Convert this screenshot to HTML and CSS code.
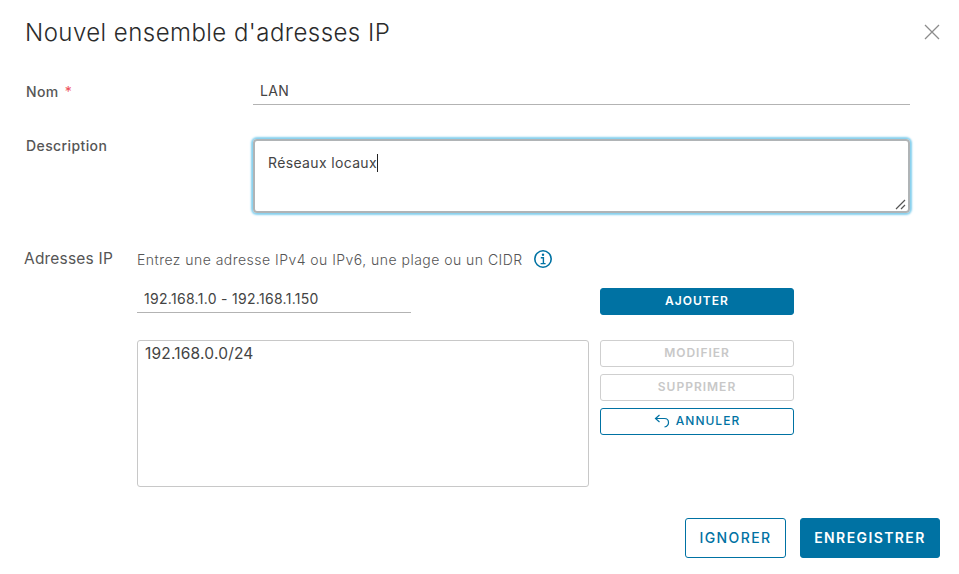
FILE: index.html
```html
<!DOCTYPE html>
<html lang="fr">
<head>
  <meta charset="UTF-8">
  <title>Nouvel ensemble d'adresses IP</title>
  <link rel="stylesheet" href="styles.css">
</head>
<body>
  <div class="dialog">
    <div class="dialog-header">
      <h1>Nouvel ensemble d'adresses IP</h1>
      <svg class="close-icon" width="16" height="16" viewBox="0 0 16 16"><path d="M1 1 L15 15 M15 1 L1 15" fill="none" stroke="#8c8c8c" stroke-width="1.3"/></svg>
    </div>

    <div class="form-row name-row">
      <label class="form-label">Nom <span class="required">*</span></label>
      <div class="line-input">LAN</div>
    </div>

    <div class="form-row desc-row">
      <label class="form-label">Description</label>
      <div class="desc-box">
        <span>Réseaux locaux</span><span class="caret"></span>
        <svg class="resize-grip" width="12" height="12" viewBox="0 0 12 12"><path d="M1 11 L10 2 M6 11 L10 7" fill="none" stroke="#555" stroke-width="1.2"/></svg>
      </div>
    </div>

    <div class="ip-section">
      <div class="ip-title">Adresses IP</div>
      <div class="ip-body">
        <div class="ip-hint">
          <span>Entrez une adresse IPv4 ou IPv6, une plage ou un CIDR</span>
          <svg width="20" height="20" viewBox="0 0 20 20"><circle cx="10" cy="10" r="8.2" fill="none" stroke="#0072a3" stroke-width="1.6"/><circle cx="10" cy="5.8" r="1.2" fill="#0072a3"/><path d="M7.8 8.8 H10.4 V14.4 M7.6 14.6 H12.6" fill="none" stroke="#0072a3" stroke-width="1.4"/></svg>
        </div>
        <div class="ip-grid">
          <div class="line-input ip-input">192.168.1.0 - 192.168.1.150</div>
          <button class="btn btn-primary btn-small">AJOUTER</button>
          <div class="ip-list">192.168.0.0/24</div>
          <div class="btn-stack">
            <button class="btn btn-disabled btn-small">MODIFIER</button>
            <button class="btn btn-disabled btn-small">SUPPRIMER</button>
            <button class="btn btn-outline btn-small">
              <svg width="16" height="16" viewBox="0 0 16 16"><path d="M5.5 2 L1.5 5.5 L5.5 9 M1.5 5.5 H10.5 C13 5.5 14.5 7.2 14.5 9.5 C14.5 11.8 13 13.5 10.5 14" fill="none" stroke="#0072a3" stroke-width="1.2"/></svg>
              ANNULER
            </button>
          </div>
        </div>
      </div>
    </div>

    <div class="dialog-footer">
      <button class="btn btn-outline btn-large">IGNORER</button>
      <button class="btn btn-primary btn-large">ENREGISTRER</button>
    </div>
  </div>
</body>
</html>
```

FILE: styles.css
```css
:root {
  --primary: #0072a3;
  --text-color: #565656;
  --line: #b3b3b3;
}
* { box-sizing: border-box; }
body {
  margin: 0;
  font-family: Inter, "Open Sans", sans-serif;
  background: #fff;
  color: #333;
}
.dialog {
  width: 959px;
  height: 574px;
  padding: 0 19px 0 25px;
  overflow: hidden;
}
.dialog-header {
  display: flex;
  justify-content: space-between;
  align-items: center;
  height: 64px;
}
h1 {
  margin: 0;
  font-size: 24px;
  font-weight: 300;
  letter-spacing: 0.45px;
  color: #2b2b2b;
}
.form-row {
  display: grid;
  grid-template-columns: 228px 657px;
}
.form-label {
  font-size: 14px;
  font-weight: 500;
  letter-spacing: 0.4px;
  margin-left: 1px;
  color: var(--text-color);
}
.required {
  margin-left: 2px;
  font-weight: 400;
  color: #ee4f5a;
}
.name-row {
  margin-top: 15px;
  align-items: center;
}
.name-row .form-label {
  padding-bottom: 2px;
}
.line-input {
  font-size: 14px;
  letter-spacing: 0.3px;
  height: 26px;
  line-height: 24px;
  padding-left: 7px;
  border-bottom: 1px solid var(--line);
  color: #444;
}
.desc-row {
  margin-top: 34px;
}
.desc-row .form-label {
  line-height: 14px;
}
.desc-box {
  position: relative;
  height: 74px;
  padding: 12px 13px;
  font-size: 14px;
  letter-spacing: 0.35px;
  line-height: 20px;
  color: #444;
  border: 2px solid #b0b4b6;
  border-radius: 4px;
  box-shadow: 0 0 2px 2px #86d0ee;
}
.caret {
  display: inline-block;
  width: 1px;
  height: 18px;
  background: #222;
  vertical-align: -4px;
}
.resize-grip {
  position: absolute;
  right: 1px;
  bottom: 1px;
}
.ip-section {
  display: flex;
  margin-top: 34px;
  margin-left: -1px;
}
.ip-title {
  width: 113px;
  font-size: 15.5px;
  letter-spacing: 0.2px;
  line-height: 24px;
  color: #555;
}
.ip-hint {
  display: flex;
  align-items: center;
  gap: 10px;
  height: 24px;
  font-size: 14px;
  letter-spacing: 0.47px;
  font-weight: 300;
  color: #555;
}
.ip-grid {
  display: grid;
  grid-template-columns: 452px 194px;
  column-gap: 11px;
  row-gap: 25px;
  margin-top: 17px;
}
.ip-input {
  width: 274px;
  height: 25px;
  line-height: 22px;
}
.ip-list {
  height: 147px;
  padding: 2px 7px;
  font-size: 15.5px;
  letter-spacing: 0.2px;
  line-height: 22px;
  color: #444;
  border: 1px solid #c8c8c8;
  border-radius: 3px;
}
.btn-stack {
  display: flex;
  flex-direction: column;
  gap: 7px;
}
.btn {
  display: flex;
  align-items: center;
  justify-content: center;
  font-family: inherit;
  font-weight: 600;
  border-radius: 3px;
  border: 1px solid var(--primary);
  background: #fff;
  letter-spacing: 1px;
  padding: 0 0 2px;
}
.btn-small {
  width: 194px;
  height: 27px;
  font-size: 12px;
  gap: 6px;
}
.btn-large {
  height: 40px;
  font-size: 14px;
  letter-spacing: 1.4px;
}
.btn-primary {
  background: var(--primary);
  color: #fff;
}
.btn-outline {
  color: var(--primary);
  font-weight: 500;
}
.btn-disabled {
  color: #c8c8c8;
  border-color: #cfcfcf;
}
.dialog-footer {
  display: flex;
  justify-content: flex-end;
  gap: 14px;
  margin-top: 31px;
}
.dialog-footer .btn-outline { width: 101px; }
.dialog-footer .btn-primary { width: 140px; }
```
